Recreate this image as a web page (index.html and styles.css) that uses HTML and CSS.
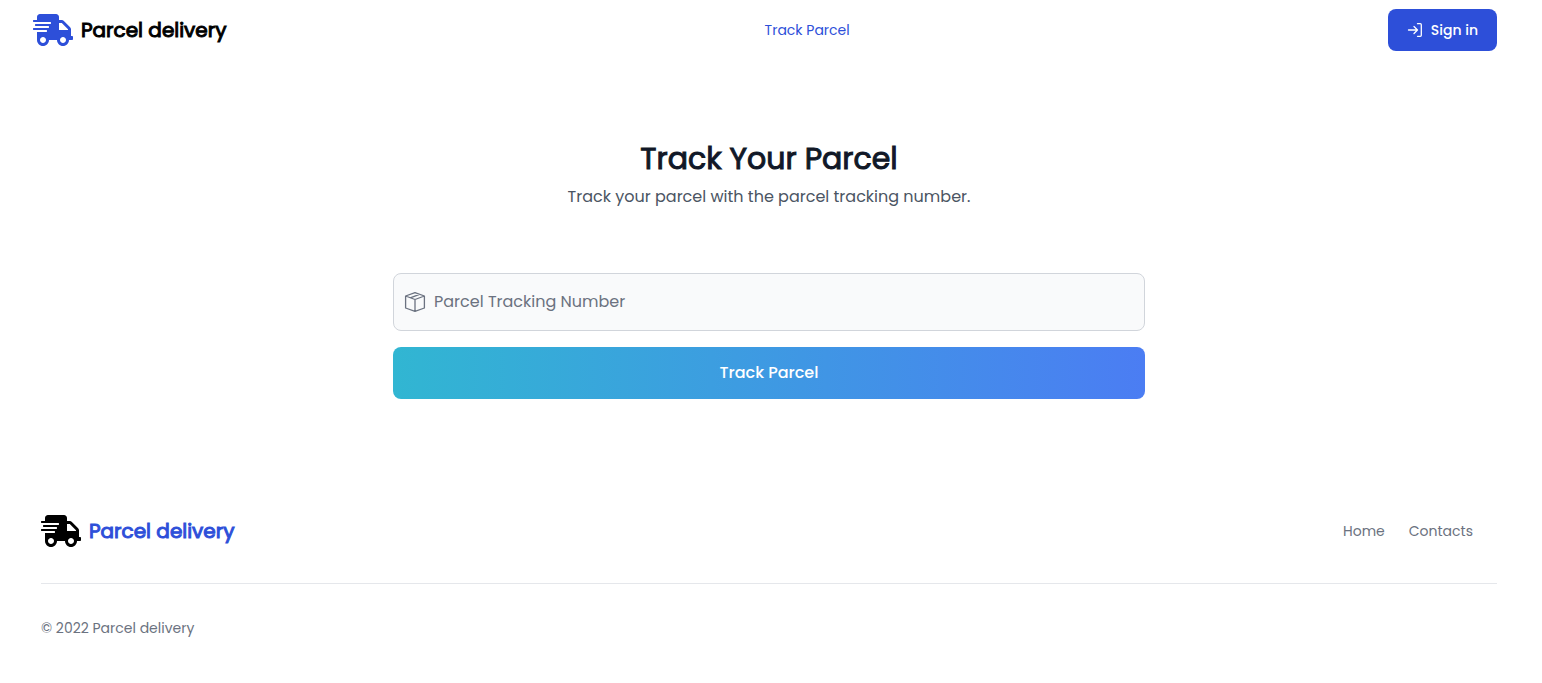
FILE: index.html
```html
<!DOCTYPE html>
<html lang="en">
<head>
<meta charset="utf-8">
<meta name="viewport" content="width=device-width, initial-scale=1">
<title>Parcel delivery</title>
<link rel="stylesheet" href="styles.css">
</head>
<body>
<svg class="sprite" aria-hidden="true">
  <symbol id="truck" viewBox="0 0 640 512">
    <path d="M624 352h-16V243.900c0-12.700-5.100-24.900-14.100-33.900L494 110.100c-9-9-21.200-14.100-33.900-14.100H416V48c0-26.500-21.500-48-48-48H112C85.500 0 64 21.500 64 48v48H8c-4.400 0-8 3.600-8 8v16c0 4.400 3.600 8 8 8h272c4.400 0 8 3.600 8 8v16c0 4.400-3.600 8-8 8H40c-4.400 0-8 3.600-8 8v16c0 4.400 3.600 8 8 8h208c4.400 0 8 3.600 8 8v16c0 4.400-3.600 8-8 8H8c-4.400 0-8 3.600-8 8v16c0 4.400 3.600 8 8 8h208c4.400 0 8 3.600 8 8v16c0 4.400-3.600 8-8 8H64v128c0 53 43 96 96 96s96-43 96-96h128c0 53 43 96 96 96s96-43 96-96h48c8.800 0 16-7.200 16-16v-32c0-8.800-7.200-16-16-16zM160 464c-26.500 0-48-21.500-48-48s21.500-48 48-48 48 21.500 48 48-21.500 48-48 48zm320 0c-26.500 0-48-21.500-48-48s21.500-48 48-48 48 21.500 48 48-21.500 48-48 48zm80-208H416V144h44.100l99.900 99.900V256z"/>
  </symbol>
</svg>

<header class="header">
  <a class="brand" href="#"><svg class="brand-icon" aria-hidden="true"><use href="#truck"/></svg>Parcel delivery</a>
  <nav class="nav"><a href="#track">Track Parcel</a></nav>
  <button class="sign-in" type="button">
    <svg class="sign-in-icon" viewBox="0 0 16 16" aria-hidden="true"><path d="M1.500 8h9M7 4.500 10.500 8 7 11.500M10.500 1.700h2.800a1 1 0 0 1 1 1v10.600a1 1 0 0 1-1 1h-2.800"/></svg>
    Sign in
  </button>
</header>

<main class="main" id="track">
  <h1 class="title">Track Your Parcel</h1>
  <p class="subtitle">Track your parcel with the parcel tracking number.</p>
  <form class="form">
    <div class="field">
      <svg class="field-icon" viewBox="0 0 22 22" aria-hidden="true"><path d="M11 1.600 20.400 5v12L11 20.400 1.600 17V5zM1.600 5 11 8.500 20.400 5M11 8.500v12M6.200 6.800l9.300-3.500"/></svg>
      <input class="input" type="text" aria-label="Parcel Tracking Number" placeholder="Parcel Tracking Number">
    </div>
    <button class="submit" type="submit">Track Parcel</button>
  </form>
</main>

<footer class="footer">
  <div class="footer-top">
    <a class="brand brand-footer" href="#"><svg class="brand-icon" aria-hidden="true"><use href="#truck"/></svg>Parcel delivery</a>
    <nav class="footer-links"><a href="#">Home</a><a href="#">Contacts</a></nav>
  </div>
  <p class="copyright">© 2022 Parcel delivery</p>
</footer>
</body>
</html>
```
FILE: styles.css
```css
* { box-sizing: border-box; }

body {
  margin: 0;
  padding-right: 4px;
  background: #fff;
  color: #6b7280;
  font-family: Poppins, Inter, sans-serif;
  font-size: 14px;
  line-height: 20px;
}

a { color: inherit; text-decoration: none; }
button, input { font: inherit; }
h1, p { margin: 0; }

.sprite { position: absolute; width: 0; height: 0; }

.header {
  display: flex;
  align-items: center;
  justify-content: space-between;
  padding: 9px 41px 9px 33px;
}

.brand {
  display: flex;
  align-items: center;
  gap: 8px;
  color: #000;
  font-size: 20px;
  line-height: 32px;
  -webkit-text-stroke: 1px currentColor;
}
.brand-icon { width: 40px; height: 32px; fill: #2d4fd9; }
.brand-footer { color: #2d4fd9; }
.brand-footer .brand-icon { fill: #000; }

.nav { color: #2d4fd9; }

.sign-in {
  display: flex;
  align-items: center;
  gap: 8px;
  padding: 11px 19px;
  border: 0;
  border-radius: 8px;
  background: #2d4fd9;
  color: #fff;
  font-weight: 500;
}
.sign-in-icon {
  width: 16px;
  height: 16px;
  fill: none;
  stroke: currentColor;
  stroke-width: 1.3;
  stroke-linecap: round;
  stroke-linejoin: round;
}

.main {
  max-width: 752px;
  margin: 0 auto;
  padding: 81px 0 84px;
  text-align: center;
}
.title {
  color: #111827;
  font-size: 30px;
  font-weight: 400;
  line-height: 36px;
  -webkit-text-stroke: 1px currentColor;
}
.subtitle {
  margin-top: 8px;
  color: #4b5563;
  font-size: 16px;
  line-height: 24px;
}

.form { display: grid; gap: 16px; margin-top: 64px; }
.field {
  display: flex;
  align-items: center;
  gap: 8px;
  height: 58px;
  padding: 0 10px;
  border: 1px solid #d1d5db;
  border-radius: 8px;
  background: #f9fafb;
}
.field-icon {
  width: 22px;
  height: 22px;
  fill: none;
  stroke: #6b7280;
  stroke-width: 1.3;
  stroke-linejoin: round;
}
.input {
  flex: 1;
  min-width: 0;
  padding: 0;
  border: 0;
  outline: 0;
  background: transparent;
  color: #111827;
  font-size: 16px;
  line-height: 24px;
}
.input::placeholder { color: #6b7280; opacity: 1; }
.submit {
  padding: 14px;
  border: 0;
  border-radius: 8px;
  background: linear-gradient(90deg, #31b6d2, #4b7df3);
  color: #fff;
  font-size: 16px;
  font-weight: 500;
  line-height: 24px;
}

.footer { padding: 32px 41px; }
.footer-top {
  display: flex;
  align-items: center;
  justify-content: space-between;
  padding-bottom: 36px;
  border-bottom: 1px solid #e5e7eb;
}
.footer-links { display: flex; gap: 24px; padding-right: 24px; }
.copyright { margin-top: 34px; }
```
